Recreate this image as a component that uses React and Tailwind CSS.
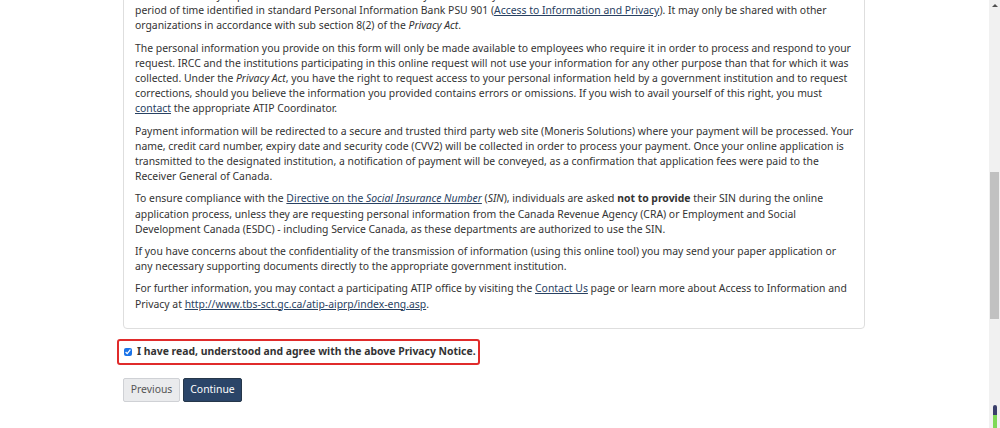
import { useState } from 'react';

const linkCls = "text-[#284162] underline underline-offset-[1px]";

function Scrollbar() {
  return (
    <div className="w-[11px] h-[428px] bg-[#f1f1f1] flex flex-col items-center shrink-0">
      {/* up arrow */}
      <div className="mt-[4px] w-0 h-0 border-l-[3px] border-r-[3px] border-b-[3px] border-l-transparent border-r-transparent border-b-[#505050]" />
      {/* thumb */}
      <div className="mt-[165px] w-[9px] h-[147px] bg-[#c1c1c1]" />
      {/* little widget at the bottom */}
      <div className="mt-auto w-[4px] h-[23px] rounded-t-[2px] overflow-hidden flex flex-col">
        <div className="h-[10px] bg-[#3a3f6b]" />
        <div className="flex-1 bg-[#7ed957]" />
      </div>
    </div>
  );
}

export default function App() {
  const [agreed, setAgreed] = useState(true);

  return (
    <div className="flex w-[1000px] h-[428px] overflow-hidden bg-white" style={{ fontFamily: '"Noto Sans", "Open Sans", sans-serif' }}>
      <div className="flex-1 pl-[123px]">
        {/* Privacy notice panel */}
        <div className="w-[742px] -mt-[23px] border border-[#dedede] rounded-[4px] pl-[11px] pr-[8px] pt-[10px] pb-[9px] text-[10.4px] leading-[15.2px] text-[#333]">
          <p className="mb-[7px]">
            The information you provide is collected under the authority of the Privacy Act and will be retained for a minimum
            <br />
            period of time identified in standard Personal Information Bank PSU 901 (<a href="#" className={linkCls}>Access to Information and Privacy</a>). It may only be shared with other
            <br />
            organizations in accordance with sub section 8(2) of the <i>Privacy Act</i>.
          </p>
          <p className="mb-[7px]">
            The personal information you provide on this form will only be made available to employees who require it in order to process and respond to your
            <br />
            request. IRCC and the institutions participating in this online request will not use your information for any other purpose than that for which it was
            <br />
            collected. Under the <i>Privacy Act</i>, you have the right to request access to your personal information held by a government institution and to request
            <br />
            corrections, should you believe the information you provided contains errors or omissions. If you wish to avail yourself of this right, you must
            <br />
            <a href="#" className={linkCls}>contact</a> the appropriate ATIP Coordinator.
          </p>
          <p className="mb-[7px]">
            Payment information will be redirected to a secure and trusted third party web site (Moneris Solutions) where your payment will be processed. Your
            <br />
            name, credit card number, expiry date and security code (CVV2) will be collected in order to process your payment. Once your online application is
            <br />
            transmitted to the designated institution, a notification of payment will be conveyed, as a confirmation that application fees were paid to the
            <br />
            Receiver General of Canada.
          </p>
          <p className="mb-[7px]">
            To ensure compliance with the <a href="#" className={linkCls}>Directive on the <i>Social Insurance Number</i></a> (<i>SIN</i>), individuals are asked <b>not to provide</b> their SIN during the online
            <br />
            application process, unless they are requesting personal information from the Canada Revenue Agency (CRA) or Employment and Social
            <br />
            Development Canada (ESDC) - including Service Canada, as these departments are authorized to use the SIN.
          </p>
          <p className="mb-[7px]">
            If you have concerns about the confidentiality of the transmission of information (using this online tool) you may send your paper application or
            <br />
            any necessary supporting documents directly to the appropriate government institution.
          </p>
          <p className="mb-[7px]">
            For further information, you may contact a participating ATIP office by visiting the <a href="#" className={linkCls}>Contact Us</a> page or learn more about Access to Information and
            <br />
            Privacy at <a href="#" className={linkCls}>http://www.tbs-sct.gc.ca/atip-aiprp/index-eng.asp</a>.
          </p>
        </div>

        {/* Agreement checkbox */}
        <label className="mt-[10px] -ml-[6px] inline-flex items-center h-[26px] pl-[5px] pr-[2px] border-2 border-[#e02b2b] rounded-[3px] cursor-pointer">
          <input
            type="checkbox"
            checked={agreed}
            onChange={(e) => setAgreed(e.target.checked)}
            className="w-[8px] h-[8px] m-0 accent-[#1a73e8]"
          />
          <span className="ml-[5px] text-[10.4px] font-bold text-[#333]">I have read, understood and agree with the above Privacy Notice.</span>
        </label>

        {/* Navigation */}
        <div className="mt-[13px] flex gap-[3px]">
          <button className="h-[24px] w-[57px] rounded-[2px] border border-[#cfd1d5] bg-[#eaebed] text-[10.4px] text-[#555]">Previous</button>
          <button className="h-[24px] w-[59px] rounded-[2px] border border-[#26374a] bg-[#2b4568] text-[10.4px] text-white">Continue</button>
        </div>
      </div>
      <Scrollbar />
    </div>
  );
}
